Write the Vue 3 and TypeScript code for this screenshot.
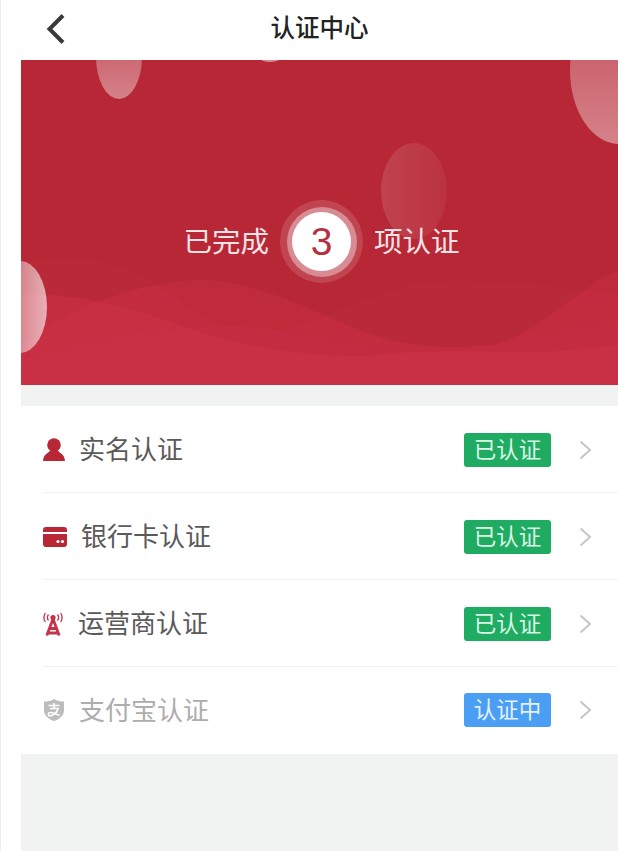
<script setup lang="ts">
interface AuthItem {
  label: string;
  icon: 'person' | 'card' | 'tower' | 'shield';
  status: string;
  pending?: boolean;
}

const items: AuthItem[] = [
  { label: '实名认证', icon: 'person', status: '已认证' },
  { label: '银行卡认证', icon: 'card', status: '已认证' },
  { label: '运营商认证', icon: 'tower', status: '已认证' },
  { label: '支付宝认证', icon: 'shield', status: '认证中', pending: true },
];
</script>

<template>
  <div class="page">
    <header class="topbar">
      <button class="topbar__back" type="button" aria-label="返回">
        <svg width="20" height="32" viewBox="0 0 20 32">
          <path d="M17 2.500 3.500 16 17 29.500" fill="none" stroke="#3a3a3a" stroke-width="4" />
        </svg>
      </button>
      <h1 class="topbar__title">认证中心</h1>
      <span></span>
    </header>

    <section class="hero">
      <svg class="hero__bg" width="597" height="325" viewBox="0 0 597 325" preserveAspectRatio="none">
        <defs>
          <linearGradient id="bubble-a" x1="0" y1="0" x2="0" y2="1">
            <stop offset="0" stop-color="#fff" stop-opacity="0.18" />
            <stop offset="1" stop-color="#fff" stop-opacity="0.42" />
          </linearGradient>
          <linearGradient id="bubble-b" x1="1" y1="0" x2="0" y2="0">
            <stop offset="0" stop-color="#fff" stop-opacity="0.05" />
            <stop offset="1" stop-color="#fff" stop-opacity="0.13" />
          </linearGradient>
          <linearGradient id="bubble-c" x1="0" y1="0" x2="1" y2="0">
            <stop offset="0" stop-color="#fff" stop-opacity="0.22" />
            <stop offset="1" stop-color="#fff" stop-opacity="0.62" />
          </linearGradient>
        </defs>
        <rect width="597" height="325" fill="#b72735" />
        <path d="M0 203C40 195 80 195 120 215C160 238 190 270 230 273C280 275 330 240 390 225C440 215 520 225 597 235V325H0Z" fill="#d63750" opacity="0.12" />
        <path d="M0 285C40 255 100 225 170 220C220 218 270 240 320 262C370 285 410 290 470 285C510 280 560 225 597 210V325H0Z" fill="#d63750" opacity="0.28" />
        <path d="M0 235C50 232 100 245 150 262C210 285 290 300 360 295C440 285 500 300 597 285V325H0Z" fill="#d63750" opacity="0.3" />
        <path d="M0 325V300C100 270 180 262 240 268C300 275 340 292 400 292C470 292 530 270 597 262V325Z" fill="#d63750" opacity="0.16" />
        <ellipse cx="98" cy="-3" rx="23" ry="42" fill="url(#bubble-a)" />
        <ellipse cx="249" cy="-18" rx="20" ry="20" fill="#fff" fill-opacity="0.45" />
        <ellipse cx="598" cy="10" rx="49" ry="74" fill="url(#bubble-a)" />
        <ellipse cx="393" cy="131" rx="33" ry="48" fill="url(#bubble-b)" />
        <ellipse cx="-1" cy="247" rx="27" ry="46" fill="url(#bubble-c)" />
      </svg>

      <div class="hero__summary">
        <span class="hero__text">已完成</span>
        <div class="count">
          <div class="count__mid">
            <div class="count__num">3</div>
          </div>
        </div>
        <span class="hero__text">项认证</span>
      </div>
    </section>

    <div class="content">
      <ul class="list">
        <li v-for="item in items" :key="item.label" class="row">
          <div class="row__inner">
            <svg v-if="item.icon === 'person'" width="22" height="24" viewBox="0 0 22 24" fill="#b72735">
              <circle cx="11" cy="7" r="6.800" />
              <path d="M7 12.500h8c1 2.500 6.500 3 7 10.500H0c.5-7.500 6-8 7-10.500Z" />
            </svg>
            <svg v-else-if="item.icon === 'card'" width="24" height="20" viewBox="0 0 24 20">
              <path d="M3 0h18a3 3 0 0 1 3 3v2H0V3a3 3 0 0 1 3-3ZM0 7h24v10a3 3 0 0 1-3 3H3a3 3 0 0 1-3-3Z" fill="#b72735" />
              <circle cx="15" cy="14.500" r="1.600" fill="#fff" />
              <circle cx="19.500" cy="14.500" r="1.600" fill="#fff" />
            </svg>
            <svg v-else-if="item.icon === 'tower'" width="21" height="24" viewBox="0 0 21 24" fill="none">
              <path d="M3.800 23.500 10 7l6.200 16.500M6 16.500h8M4.500 21h11" stroke="#c5324a" stroke-width="2.800" />
              <circle cx="10" cy="5.500" r="2.600" fill="#c5324a" />
              <path d="M5.500 2.500a5 5 0 0 0 0 6M14.500 2.500a5 5 0 0 1 0 6M2.400 1a8 8 0 0 0 0 9M17.600 1a8 8 0 0 1 0 9" stroke="#c5324a" stroke-width="1.300" />
            </svg>
            <svg v-else width="22" height="24" viewBox="0 0 22 24">
              <path d="M11 1C14 3 17 3.500 21 3.500V12c0 5.500-4 9-10 11C5 21 1 17.500 1 12V3.500C5 3.500 8 3 11 1Z" fill="#bcbcbc" />
              <path d="M5.500 7.500h11M11 5v5M7 10.500h8c-1 4-4 7-8.500 7.500-2-1-1.500-3.500 1-3.500 3 0 6 1.500 9 3" fill="none" stroke="#fff" stroke-width="1.600" />
            </svg>

            <span class="row__label" :class="{ 'row__label--muted': item.pending }">{{ item.label }}</span>
            <span class="badge" :class="{ 'badge--pending': item.pending }">{{ item.status }}</span>
            <svg class="row__arrow" width="13" height="20" viewBox="0 0 13 20">
              <path d="M1.500 1.500 11 10l-9.500 8.500" fill="none" stroke="#c6c6c6" stroke-width="2" />
            </svg>
          </div>
        </li>
      </ul>
    </div>
  </div>
</template>

<style scoped>
.page {
  width: 100%;
  height: 851px;
  box-sizing: border-box;
  border-left: 1px solid #ececec;
  padding-left: 20px;
  background: #fff;
  display: flex;
  flex-direction: column;
  overflow: hidden;
  font-family: "Noto Sans CJK SC", "Noto Sans", sans-serif;
}
.topbar {
  height: 60px;
  flex: none;
  display: grid;
  grid-template-columns: 1fr auto 1fr;
  align-items: center;
}
.topbar__back {
  justify-self: start;
  margin-left: 25px;
  margin-top: -3px;
  padding: 0;
  border: 0;
  background: none;
  display: flex;
}
.topbar__title {
  margin: -7px 0 0;
  font-size: 24.500px;
  font-weight: 500;
  color: #222;
}
.hero {
  position: relative;
  height: 325px;
  flex: none;
  overflow: hidden;
  padding-top: 140px;
  box-sizing: border-box;
}
.hero__bg {
  position: absolute;
  left: 0;
  top: 0;
}
.hero__summary {
  position: relative;
  display: flex;
  align-items: center;
  justify-content: center;
  gap: 11px;
  padding-left: 4px;
}
.hero__text {
  font-size: 28.500px;
  color: #f9e3e6;
  padding-bottom: 4px;
}
.count {
  width: 83px;
  height: 83px;
  border-radius: 50%;
  background: rgba(255, 255, 255, 0.14);
  display: flex;
  align-items: center;
  justify-content: center;
}
.count__mid {
  width: 70px;
  height: 70px;
  border-radius: 50%;
  background: rgba(255, 255, 255, 0.38);
  display: flex;
  align-items: center;
  justify-content: center;
}
.count__num {
  width: 59px;
  height: 59px;
  border-radius: 50%;
  background: #fff;
  color: #b72f3f;
  font-family: "Liberation Sans", sans-serif;
  font-size: 39px;
  line-height: 59px;
  text-align: center;
}
.content {
  flex: 1;
  background: #f1f2f2;
  padding-top: 21px;
}
.list {
  list-style: none;
  margin: 0;
  padding: 0 0 0 22px;
  background: #fff;
}
.row {
  height: 87px;
  box-sizing: border-box;
  border-bottom: 1px solid #f1f1f1;
}
.row:last-child {
  border-bottom: 0;
}
.row__inner {
  height: 100%;
  box-sizing: border-box;
  display: flex;
  align-items: center;
  gap: 15px;
  padding: 2px 26px 0 0;
}
.row:last-child .row__inner {
  padding-top: 0;
  padding-bottom: 1px;
}
.row__label {
  flex: 1;
  font-size: 26px;
  color: #5a5a5a;
  padding-bottom: 6px;
  margin-left: -1px;
}
.row:last-child .row__label {
  padding-bottom: 4px;
}
.row__label--muted {
  color: #adadad;
}
.badge {
  width: 87px;
  height: 34px;
  border-radius: 3px;
  background: #20ab62;
  color: #d9f6e6;
  font-size: 22.500px;
  line-height: 31px;
  text-align: center;
}
.badge--pending {
  background: #4a9ff5;
  color: #e4f1fe;
}
.row__arrow {
  margin-left: 13px;
}
</style>

<style>
body {
  background: #fff;
}
</style>
